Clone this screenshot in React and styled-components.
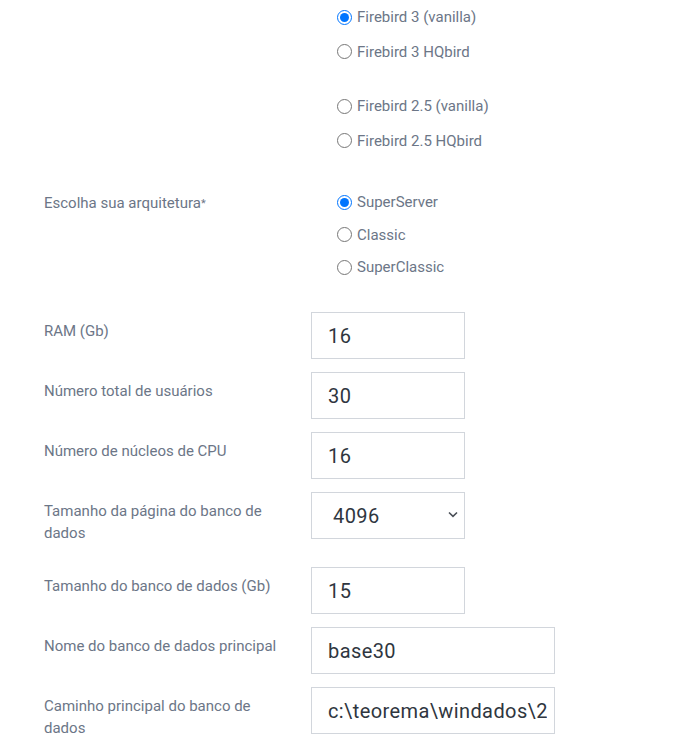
import styled, { createGlobalStyle } from 'styled-components';

const GlobalStyle = createGlobalStyle`
    body {
        margin: 0;
        background: #ffffff;
        font-family: Roboto, "Liberation Sans", Arial, sans-serif;
    }
`;

const Form = styled.form`
    display: flex;
    flex-direction: column;
    padding-left: 44px;
    width: 639px;
`;

const Row = styled.div`
    display: grid;
    grid-template-columns: 267px 1fr;
    align-items: start;
    margin-top: ${({ gap }) => gap || 0}px;
`;

const Label = styled.label`
    display: block;
    max-width: 240px;
    padding: ${({ top }) => (top !== undefined ? top : 8)}px 0 10px;
    font-size: 15px;
    line-height: 22px;
    color: #6c7687;
`;

const Required = styled.span`
    font-size: 11px;
    vertical-align: 1px;
`;

const RadioGroup = styled.div`
    display: flex;
    flex-direction: column;
    padding-left: 26px;
    margin-top: ${({ gap }) => gap || 0}px;
`;

const RadioItem = styled.label`
    display: flex;
    align-items: center;
    gap: 5px;
    height: ${({ tight }) => (tight ? 32.5 : 34.5)}px;
    font-size: 15px;
    color: #6c7687;
`;

const Radio = styled.input`
    width: 15px;
    height: 15px;
    margin: 0;
    accent-color: #0075ff;
`;

const TextInput = styled.input`
    box-sizing: border-box;
    width: ${({ wide }) => (wide ? 244 : 154)}px;
    height: 47px;
    padding: 0 7px 0 16px;
    border: 1px solid #d2d6dc;
    border-radius: 0;
    outline: none;
    font-family: Roboto, "Open Sans", sans-serif;
    font-size: 20px;
    letter-spacing: 0.4px;
    color: #2f3640;
    background: #fff;
`;

const SelectWrap = styled.div`
    position: relative;
    width: 154px;
`;

const Select = styled.select`
    box-sizing: border-box;
    width: 100%;
    height: 47px;
    padding: 0 30px 0 21px;
    border: 1px solid #d2d6dc;
    border-radius: 0;
    outline: none;
    appearance: none;
    font-family: Roboto, "Open Sans", sans-serif;
    font-size: 20px;
    letter-spacing: 0.4px;
    color: #2f3640;
    background: #fff;
`;

const Chevron = styled.svg`
    position: absolute;
    right: 7px;
    top: 19px;
    pointer-events: none;
`;

const versions = [
    [
        { id: 'fb3', text: 'Firebird 3 (vanilla)', checked: true },
        { id: 'fb3hq', text: 'Firebird 3 HQbird' },
    ],
    [
        { id: 'fb25', text: 'Firebird 2.5 (vanilla)' },
        { id: 'fb25hq', text: 'Firebird 2.5 HQbird' },
    ],
];

const architectures = [
    { id: 'ss', text: 'SuperServer', checked: true },
    { id: 'cs', text: 'Classic' },
    { id: 'sc', text: 'SuperClassic' },
];

const fields = [
    { label: 'RAM (Gb)', value: '16', gap: 28.5 },
    { label: 'Número total de usuários', value: '30', gap: 13 },
    { label: 'Número de núcleos de CPU', value: '16', gap: 13 },
    { label: 'Tamanho da página do banco de dados', value: '4096', gap: 13, select: true },
    { label: 'Tamanho do banco de dados (Gb)', value: '15', gap: 13 },
    { label: 'Nome do banco de dados principal', value: 'base30', gap: 13, wide: true },
    { label: 'Caminho principal do banco de dados', value: 'c:\\teorema\\windados\\2023\\base30.fdb', gap: 13, wide: true },
];

const App = () => {
    return (
        <>
            <GlobalStyle />
            <Form>
                <Row>
                    <div />
                    <div>
                        {versions.map((group, i) => (
                            <RadioGroup key={i} gap={i ? 20 : 0}>
                                {group.map((v) => (
                                    <RadioItem key={v.id}>
                                        <Radio type="radio" name="version" defaultChecked={v.checked} />
                                        {v.text}
                                    </RadioItem>
                                ))}
                            </RadioGroup>
                        ))}
                    </div>
                </Row>
                <Row gap={28}>
                    <Label top={6}>
                        Escolha sua arquitetura<Required>*</Required>
                    </Label>
                    <RadioGroup>
                        {architectures.map((a) => (
                            <RadioItem key={a.id} tight>
                                <Radio type="radio" name="arch" defaultChecked={a.checked} />
                                {a.text}
                            </RadioItem>
                        ))}
                    </RadioGroup>
                </Row>
                {fields.map((f) => (
                    <Row key={f.label} gap={f.gap}>
                        <Label>{f.label}</Label>
                        {f.select ? (
                            <SelectWrap>
                                <Select defaultValue={f.value}>
                                    <option>1024</option>
                                    <option>2048</option>
                                    <option>4096</option>
                                    <option>8192</option>
                                    <option>16384</option>
                                </Select>
                                <Chevron width="10" height="7" viewBox="0 0 10 7">
                                    <path d="M1 1.5 L5 5.3 L9 1.5" fill="none" stroke="#4a4f57" strokeWidth="1.6" />
                                </Chevron>
                            </SelectWrap>
                        ) : (
                            <TextInput type="text" defaultValue={f.value} wide={f.wide} />
                        )}
                    </Row>
                ))}
            </Form>
        </>
    );
};

export default App;
